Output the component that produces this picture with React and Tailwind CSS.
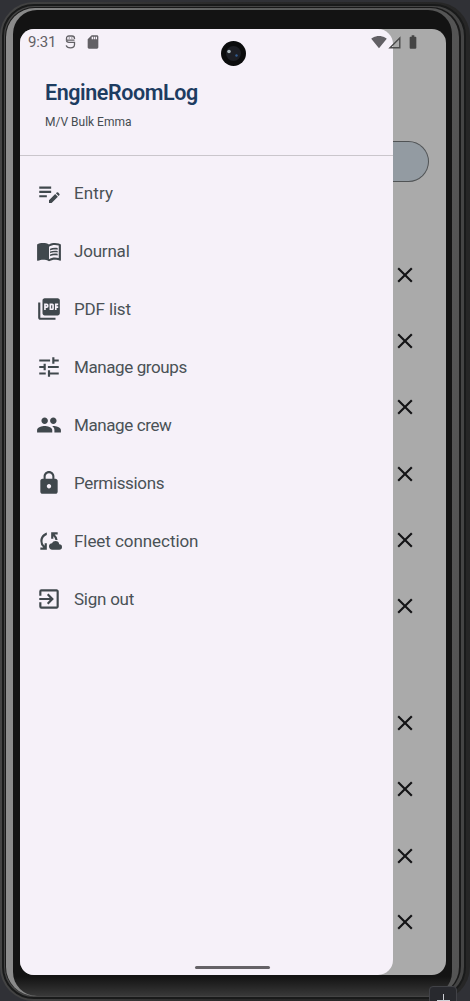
import React from "react";
import {
  MdBatteryFull,
  MdClose,
  MdCloudSync,
  MdExitToApp,
  MdLock,
  MdMenuBook,
  MdPeople,
  MdPictureAsPdf,
  MdSdCard,
  MdSignalWifi4Bar,
  MdTune,
} from "react-icons/md";

const EntryIcon = ({ className }) => (
  <svg className={className} viewBox="0 0 24 24" fill="currentColor">
    <path d="M3 10h11v2H3v-2zm0-2h11V6H3v2zm0 8h7v-2H3v2z" />
    <path d="M18.4 12.3l.71-.71a1 1 0 0 1 1.41 0l1 1a1 1 0 0 1 0 1.41l-.71.71-2.41-2.41zM17.7 13l-5.7 5.7V21.2h2.4l5.8-5.8-2.5-2.4z" />
  </svg>
);

const menuItems = [
  { label: "Entry", icon: EntryIcon, spacing: "tracking-[0.1px]" },
  { label: "Journal", icon: MdMenuBook, spacing: "tracking-[-0.2px]" },
  { label: "PDF list", icon: MdPictureAsPdf, spacing: "tracking-[-0.15px]" },
  { label: "Manage groups", icon: MdTune, spacing: "tracking-[-0.4px]" },
  { label: "Manage crew", icon: MdPeople, spacing: "tracking-[-0.4px]" },
  { label: "Permissions", icon: MdLock, spacing: "tracking-[-0.35px]" },
  { label: "Fleet connection", icon: MdCloudSync, spacing: "tracking-[-0.06px]" },
  { label: "Sign out", icon: MdExitToApp, spacing: "tracking-[-0.25px]" },
];

const DebugIcon = () => (
  <svg className="h-[14px] w-[11px]" viewBox="0 0 11 14" fill="none" stroke="#626065" strokeWidth="1.3">
    <path d="M1.5 5.5V3.5Q1.5 1 4 1H7Q9.5 1 9.5 3.5V4" />
    <path d="M1.5 5.5Q1.5 7.3 4 7.3H9.5V9.5Q9.5 12.8 5.5 12.8Q1.8 12.8 1.2 10.3M1.5 5.2H9.5" />
    <path d="M3.8 3H4.6M6.5 3H7.3" />
  </svg>
);

const StatusBar = () => (
  <div className="absolute inset-x-0 top-0 flex h-[26px] items-center text-[#626065]">
    <span className="ml-[8px] w-[37px] text-[15px] leading-none tracking-[-0.2px]">9:31</span>
    <DebugIcon />
    <MdSdCard className="ml-[9px] h-[16px] w-[16px]" />
    <MdSignalWifi4Bar className="ml-auto h-[16px] w-[16px]" />
    <svg className="ml-[1px] h-[13px] w-[13px]" viewBox="0 0 13 13" fill="none" stroke="#4c4c4c" strokeWidth="1.4">
      <path d="M2 11.8L11.8 2V11.8Z" />
    </svg>
    <MdBatteryFull className="ml-[4px] mr-[25px] h-[16px] w-[16px] text-[#444]" />
  </div>
);

const Camera = () => (
  <svg className="absolute left-[201px] top-[12px] h-[25px] w-[25px]" viewBox="0 0 25 25">
    <circle cx="12.5" cy="12.5" r="12.5" fill="#0b0c0d" />
    <circle cx="12.5" cy="12.5" r="7.5" fill="#1d1f25" />
    <circle cx="8" cy="10.5" r="1.8" fill="#a7b4b9" />
    <circle cx="15.5" cy="14.5" r="1.2" fill="#315c91" />
  </svg>
);

const Drawer = () => (
  <div className="flex w-[373px] flex-col rounded-r-[15px] bg-[#f6f1f9]">
    <div className="h-[127px] border-b border-[#cac6cc] pl-[25px] pt-[50px]">
      <h1 className="text-[21.5px] font-semibold leading-[28px] tracking-[-0.42px] text-[#1d3c61]">EngineRoomLog</h1>
      <p className="mt-[8px] text-[12px] leading-[14px] text-[#454c51]">M/V Bulk Emma</p>
    </div>
    <nav className="flex flex-col pt-[8px]">
      {menuItems.map(({ label, icon: Icon, spacing }) => (
        <button key={label} className="flex h-[58px] items-center pl-[16px] text-left text-[#40484d]">
          <Icon className="h-[26px] w-[26px]" />
          <span className={`ml-[12px] text-[17px] leading-[24px] text-[#4a5156] ${spacing}`}>{label}</span>
        </button>
      ))}
    </nav>
  </div>
);

const CloseList = ({ count }) => (
  <div className="flex flex-col">
    {Array.from({ length: count }).map((_, i) => (
      <div key={i} className="flex h-[66.2px] items-center text-[#141416]">
        <MdClose className="ml-[-1px] h-[26px] w-[26px]" />
      </div>
    ))}
  </div>
);

const App = () => {
  return (
    <div className="relative h-[1001px] w-[470px] overflow-hidden bg-[#303136] pt-[2px] font-[Roboto,sans-serif]">
      {/* phone body */}
      <div className="h-[999px] rounded-[34px] bg-linear-to-r from-[#444] via-[#292929] to-[#262626] py-[2px] pl-[2px] pr-[4px]">
        <div className="h-full rounded-[32px] border-2 border-[#191a1a] bg-[#444] py-px pl-px pr-[3px]">
          <div className="h-full rounded-[30px] bg-[#191919] pl-px pr-[2px] pt-px">
            <div className="h-[988px] rounded-[29px] bg-linear-to-r from-[#8c8c8c] via-[#5c5e5d] to-[#545454] px-[7px] pt-[2px]">
              <div className="h-full rounded-[24px] bg-linear-to-b from-[#131313] from-98% to-[#393939] pl-[7px] pr-[6px] pt-[19px]">
                <div className="relative flex h-[946px] w-[426px] overflow-hidden rounded-[14px] bg-[#aaa]">
                  <Drawer />
                  <div className="flex w-[53px] flex-col pl-0 pt-[112px]">
                    <div className="h-[41px] w-[36px] rounded-r-[21px] border border-l-0 border-[#505355] bg-[#939ba2]" />
                    <div className="mt-[60px]">
                      <CloseList count={6} />
                    </div>
                    <div className="mt-[51px]">
                      <CloseList count={4} />
                    </div>
                  </div>
                  <StatusBar />
                  <Camera />
                  <div className="absolute bottom-[6px] left-[175px] h-[3px] w-[75px] rounded-full bg-[#656267]" />
                </div>
              </div>
            </div>
          </div>
        </div>
      </div>
      {/* emulator toolbar button */}
      <div className="absolute left-[429px] top-[986px] flex h-[28px] w-[28px] justify-center rounded-[4px] border border-[#414247] bg-[#28292e] pt-[7px]">
        <svg className="h-[13px] w-[13px]" viewBox="0 0 13 13" stroke="#ced0d6">
          <path d="M6.5 0V13M0 6.5H13" />
        </svg>
      </div>
    </div>
  );
};

export default App;
